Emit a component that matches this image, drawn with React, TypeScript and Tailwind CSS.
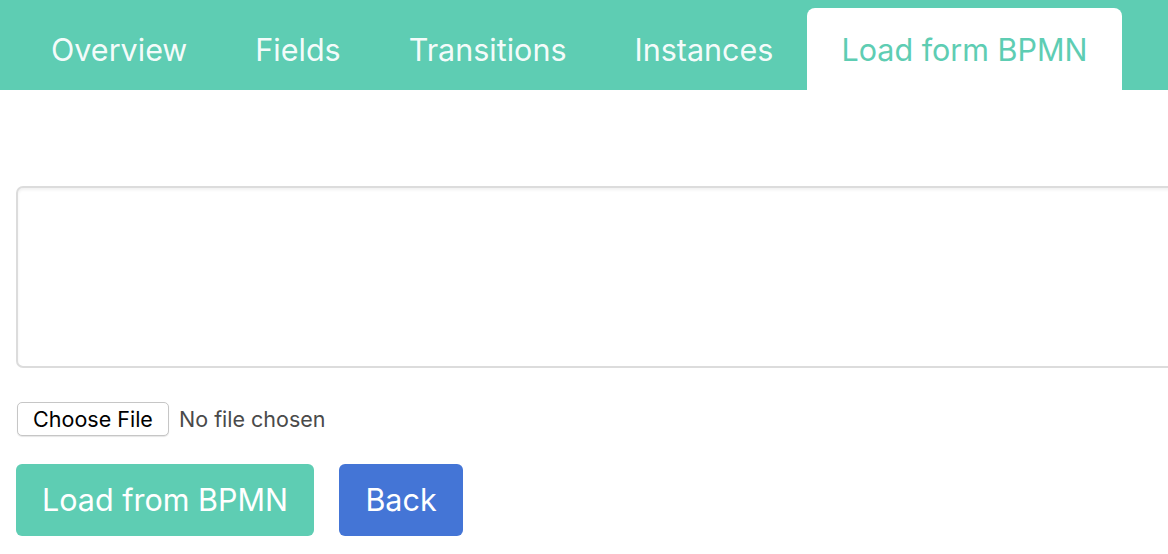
import React from 'react';

const tabs = ['Overview', 'Fields', 'Transitions', 'Instances', 'Load form BPMN'];

export default function App() {
  const active = 'Load form BPMN';

  return (
    <div className="w-[1168px] h-[554px] overflow-hidden bg-white font-['Inter',sans-serif]">
      <div className="h-[90px] bg-[#5ecdb3] flex items-end pl-[17px]">
        {tabs.map((t) => (
          <div
            key={t}
            className={
              t === active
                ? 'h-[82px] pt-[2px] px-[34px] flex items-center bg-white rounded-t-[8px] text-[#5ecdb3] text-[30.5px]'
                : 'h-[82px] pt-[2px] px-[34px] flex items-center text-white/95 text-[30.5px]'
            }
          >
            {t}
          </div>
        ))}
      </div>

      <div className="pl-[16px] pt-[96px]">
        <textarea className="block w-[1200px] h-[182px] border-2 border-[#dcdcdc] rounded-[7px] shadow-[inset_0_2px_3px_rgba(0,0,0,0.06)] outline-none resize-none" />

        <div className="mt-[34px] flex items-center gap-[10px]">
          <button className="h-[34px] w-[152px] ml-[1px] border border-[#c6c6c6] rounded-[5px] bg-white text-[21.5px] text-black font-['Inter',sans-serif] shadow-[0_1px_1px_rgba(0,0,0,0.1)]">
            Choose File
          </button>
          <span className="text-[21.5px] text-[#4a4a4a]">No file chosen</span>
        </div>

        <div className="mt-[28px] flex gap-[25px]">
          <button className="h-[72px] w-[298px] rounded-[6px] bg-[#5ecdb3] text-white text-[30.5px]">
            Load from BPMN
          </button>
          <button className="h-[72px] w-[124px] rounded-[6px] bg-[#4475d6] text-white text-[30.5px]">
            Back
          </button>
        </div>
      </div>
    </div>
  );
}
